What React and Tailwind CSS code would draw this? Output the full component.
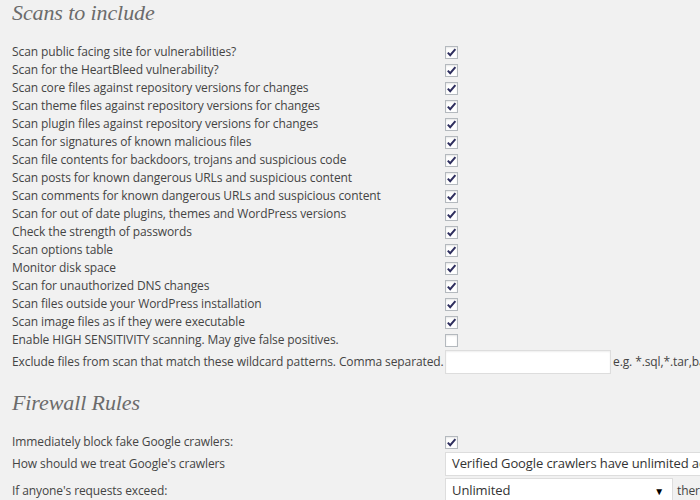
const scans = [
  ['Scan public facing site for vulnerabilities?', true],
  ['Scan for the HeartBleed vulnerability?', true],
  ['Scan core files against repository versions for changes', true],
  ['Scan theme files against repository versions for changes', true],
  ['Scan plugin files against repository versions for changes', true],
  ['Scan for signatures of known malicious files', true],
  ['Scan file contents for backdoors, trojans and suspicious code', true],
  ['Scan posts for known dangerous URLs and suspicious content', true],
  ['Scan comments for known dangerous URLs and suspicious content', true],
  ['Scan for out of date plugins, themes and WordPress versions', true],
  ['Check the strength of passwords', true],
  ['Scan options table', true],
  ['Monitor disk space', true],
  ['Scan for unauthorized DNS changes', true],
  ['Scan files outside your WordPress installation', true],
  ['Scan image files as if they were executable', true],
  ['Enable HIGH SENSITIVITY scanning. May give false positives.', false],
]

function Checkbox({ checked }) {
  return (
    <span className="flex h-[13px] w-[13px] items-center justify-center border border-[#b4b9be] bg-white shadow-[inset_0_1px_2px_rgba(0,0,0,0.1)]">
      {checked && (
        <svg width="11" height="11" viewBox="0 0 11 11">
          <path d="M1.8 5.6 L4.2 8.2 L9.4 2.2" fill="none" stroke="#2e2e5e" strokeWidth="2" />
        </svg>
      )}
    </span>
  )
}

function Heading({ children, className }) {
  return (
    <h2 className={`pl-3 font-['Liberation_Serif',serif] text-[22px] italic leading-[26px] text-[#6b6b6b] ${className}`}>
      {children}
    </h2>
  )
}

export default function App() {
  return (
    <div className="h-[500px] w-[700px] overflow-hidden bg-[#f1f1f1] font-['Open_Sans',sans-serif] text-[12px] tracking-[-0.1px] text-[#444]">
      <Heading className="h-[43px]">Scans to include</Heading>

      {scans.map(([label, checked]) => (
        <div key={label} className="flex h-[18px] items-center">
          <div className="w-[445px] shrink-0 pl-3 leading-[18px] whitespace-nowrap">{label}</div>
          <Checkbox checked={checked} />
        </div>
      ))}

      <div className="flex h-[30px] items-start">
        <div className="w-[445px] shrink-0 pt-[4px] pl-3 leading-[18px] whitespace-nowrap">
          Exclude files from scan that match these wildcard patterns. Comma separated.
        </div>
        <div className="mt-[1px] h-[24px] w-[166px] shrink-0 border border-[#ddd] bg-white shadow-[inset_0_1px_2px_rgba(0,0,0,0.07)]" />
        <div className="min-w-0 shrink pt-[4px] pl-[2px] leading-[18px] whitespace-nowrap">e.g. *.sql,*.tar,ba</div>
      </div>

      <Heading className="mt-[11px] h-[43px]">Firewall Rules</Heading>

      <div className="flex h-[18px] items-center">
        <div className="w-[445px] shrink-0 pl-3 leading-[18px]">Immediately block fake Google crawlers:</div>
        <Checkbox checked />
      </div>

      <div className="flex h-[26px] items-center">
        <div className="w-[445px] shrink-0 pl-3 leading-[18px]">How should we treat Google's crawlers</div>
        <div className="flex h-[24px] w-[260px] shrink-0 items-center border border-[#ddd] bg-white pl-[6px] text-[13px] whitespace-nowrap text-[#333]">
          Verified Google crawlers have unlimited ac
        </div>
      </div>

      <div className="mt-[1px] flex h-[26px] items-center">
        <div className="w-[445px] shrink-0 pl-3 leading-[18px]">If anyone's requests exceed:</div>
        <div className="flex h-[26px] w-[228px] shrink-0 items-center justify-between border border-[#ddd] bg-white pr-[8px] pl-[6px] text-[13px] text-[#333]">
          <span>Unlimited</span>
          <span className="text-[10px] text-black">▼</span>
        </div>
        <span className="pl-[4px] whitespace-nowrap">ther</span>
      </div>
    </div>
  )
}
